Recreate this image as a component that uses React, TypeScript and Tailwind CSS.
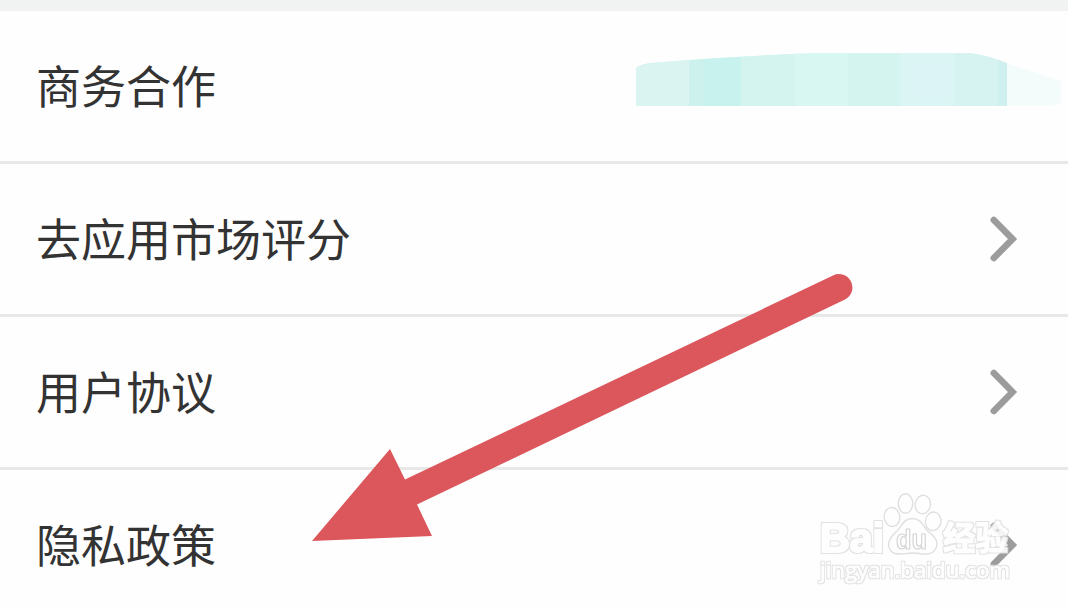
const rows = [
  { title: "商务合作", arrow: false },
  { title: "去应用市场评分", arrow: true },
  { title: "用户协议", arrow: true },
  { title: "隐私政策", arrow: true },
];

function Chevron() {
  return (
    <svg className="h-12 w-8 shrink-0" viewBox="0 0 32 48" fill="none">
      <path d="M7.8 5L26.5 24L7.8 43" stroke="#9c9c9c" strokeWidth="6.6" strokeLinecap="round" strokeLinejoin="miter" />
    </svg>
  );
}

function Smudge() {
  return (
    <svg className="h-14 w-[426px] shrink-0" viewBox="0 0 426 56">
      <defs>
        <clipPath id="brush">
          <path d="M0 16Q5 12 15 11Q50 8 100 5Q150 2 180 1H334Q350 3 371 11V54H0Z" />
        </clipPath>
      </defs>
      <path d="M370 11Q398 20 425 29V50Q420 54 400 54H370Z" fill="#f3fcfb" />
      <g clipPath="url(#brush)">
        <rect width="372" height="56" fill="#d6f5f0" />
        <rect width="53" height="56" fill="#daf4f1" />
        <rect x="53" width="15" height="56" fill="#cdf1ed" />
        <rect x="68" width="37" height="56" fill="#c8f2ed" />
        <rect x="105" width="54" height="56" fill="#d4f5ef" />
        <rect x="159" width="53" height="56" fill="#d8f7f2" />
        <rect x="212" width="52" height="56" fill="#d4f5ef" />
        <rect x="264" width="54" height="56" fill="#daf5f3" />
        <rect x="279" y="11" width="34" height="37" fill="#dcf4f5" />
        <rect x="318" width="44" height="56" fill="#d6f3f2" />
        <rect x="362" width="10" height="56" fill="#d0f0ef" />
      </g>
    </svg>
  );
}

function PointerArrow() {
  return (
    <svg className="pointer-events-none absolute left-0 top-0 h-full w-full" viewBox="0 0 1068 608">
      <path
        d="M312 541L390 449L405 479.5L833 275.5A13.3 13.3 0 0 1 845 299.5L417 504.5L432 536Z"
        fill="#db575c"
      />
    </svg>
  );
}

function Watermark() {
  return (
    <svg
      className="pointer-events-none absolute bottom-4 right-12 h-[104px] w-[208px]"
      viewBox="812 488 208 104"
      fill="#ffffff"
      opacity="0.9"
      strokeLinejoin="round"
    >
      <defs>
        {/* thin grey rim around white shapes */}
        <filter id="rim" x="-5%" y="-10%" width="110%" height="120%" colorInterpolationFilters="sRGB">
          <feMorphology in="SourceAlpha" operator="dilate" radius="1" result="grown" />
          <feFlood floodColor="#e0e0e0" />
          <feComposite in2="grown" operator="in" result="edge" />
          <feMerge>
            <feMergeNode in="edge" />
            <feMergeNode in="SourceGraphic" />
          </feMerge>
        </filter>
      </defs>
      <g stroke="#dcdcdc" strokeWidth="1.4">
        <ellipse cx="892" cy="517" rx="7.8" ry="9.5" transform="rotate(-8 892 517)" />
        <ellipse cx="905.5" cy="503.5" rx="7.2" ry="9.7" />
        <ellipse cx="922.8" cy="504.5" rx="7.6" ry="9.3" transform="rotate(10 922.8 504.5)" />
        <ellipse cx="933.2" cy="521.3" rx="7.8" ry="9.3" transform="rotate(8 933.2 521.3)" />
        <path d="M912 518.5C904 518.5 901.5 526 898 530C894 534 888.5 538 888.5 545C889 552 895 554.5 901 554C906 553.5 909 553 913 553C918 553 922 554.5 927 554C934 553.5 938 548 936.5 541C935 536 929 533 926 529C922.5 524 920 518.5 912 518.5Z" />
        <text x="896" y="548.5" fontSize="28" fontWeight="700" stroke="#cfcfcf" strokeWidth="1.2" textLength="31" lengthAdjust="spacingAndGlyphs" className="font-['Liberation_Sans',sans-serif]">
          du
        </text>
      </g>
      <g filter="url(#rim)" stroke="#ffffff">
        <text x="820" y="551.5" fontSize="40" fontWeight="700" strokeWidth="2" textLength="64" lengthAdjust="spacingAndGlyphs" className="font-['Liberation_Sans',sans-serif]">
          Bai
        </text>
        <text x="943" y="549.5" fontSize="33" fontWeight="700" strokeWidth="1.2" textLength="65" lengthAdjust="spacingAndGlyphs" className="font-['Noto_Sans_CJK_SC',sans-serif]">
          经验
        </text>
        <text x="820" y="578" fontSize="21" fontWeight="400" strokeWidth="0.6" textLength="190" lengthAdjust="spacingAndGlyphs" className="font-['Open_Sans',sans-serif]">
          jingyan.baidu.com
        </text>
      </g>
    </svg>
  );
}

export default function App() {
  return (
    <main className="relative h-[608px] w-[1068px] overflow-hidden bg-[#fefefe] font-['Noto_Sans_CJK_SC',sans-serif] text-[#333333]">
      <div className="h-[11px] bg-[#f1f3f2]" />
      {rows.map((row) => (
        <div
          key={row.title}
          className={`flex h-[153px] items-center justify-between border-b-[3px] border-[#e8e8e8] pl-9 ${
            row.arrow ? "pr-[50px]" : "pr-[6px]"
          }`}
        >
          <span className="pb-[3px] text-[45px] leading-none">{row.title}</span>
          {row.arrow ? (
            <div className="flex pb-px">
              <Chevron />
            </div>
          ) : (
            <div className="mb-3 flex">
              <Smudge />
            </div>
          )}
        </div>
      ))}
      <PointerArrow />
      <Watermark />
    </main>
  );
}
